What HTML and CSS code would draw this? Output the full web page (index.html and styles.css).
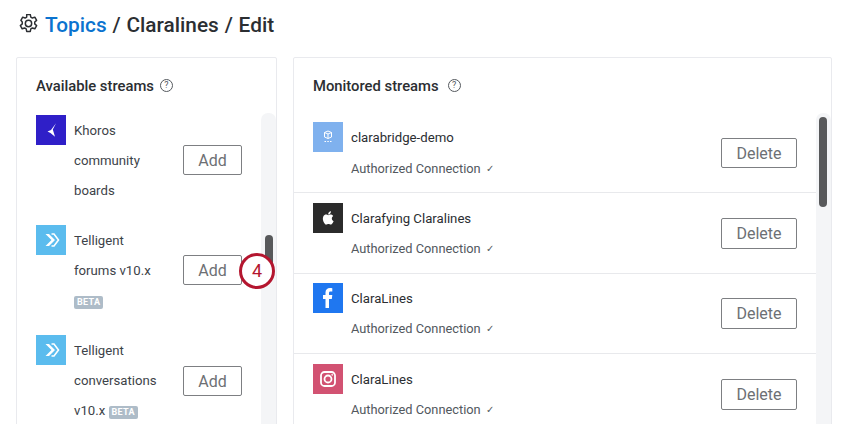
FILE: index.html
```html
<!DOCTYPE html>
<html lang="en">
<head>
<meta charset="utf-8">
<title>Topics / Claralines / Edit</title>
<link rel="stylesheet" href="styles.css">
</head>
<body>
<div class="page">
  <header class="crumbs">
    <svg class="gear" viewBox="1 1 18 18" width="19" height="19" fill="none" stroke="#2c2f33" stroke-width="1.4" stroke-linejoin="round"><path d="M8.300 1.500h3.400l.5 2.400 1.500.9 2.300-.8 1.700 3-1.800 1.600v1.800l1.800 1.600-1.700 3-2.300-.8-1.500.9-.5 2.400H8.300l-.5-2.400-1.500-.9-2.300.8-1.700-3 1.800-1.600V8.600L2.800 7l1.700-3 2.300.8 1.500-.9z"/><circle cx="10" cy="10" r="3"/></svg>
    <h1 class="crumb-text"><a class="crumb-link" href="#">Topics</a> / Claralines / Edit</h1>
  </header>
  <main class="panels">
    <section class="panel panel-left">
      <h2 class="panel-title">Available streams <span class="help">?</span></h2>
      <div class="scroller">
        <ul class="avail-list">
          <li class="avail">
            <span class="logo logo-khoros"><svg viewBox="0 0 30 30" width="30" height="30" fill="#fff"><path d="M20 8.300 16.800 14.500 19 21.700 14.500 18 11.500 16.500 15 15z"/></svg></span>
            <div class="avail-text">Khoros<br>community<br>boards</div>
            <button class="btn btn-add">Add</button>
          </li>
          <li class="avail">
            <span class="logo logo-telligent"><svg viewBox="0 0 30 30" width="30" height="30"><path d="M9.500 9h3.500l6 6-6 6H9.500l6-6z" fill="#fff"/><path d="M15.500 9H18l4.500 6-4.500 6h-2.500" fill="none" stroke="#fff" stroke-width="1.600"/></svg></span>
            <div class="avail-text">Telligent<br>forums v10.x<br><span class="beta">BETA</span></div>
            <button class="btn btn-add">Add</button>
          </li>
          <li class="avail">
            <span class="logo logo-telligent"><svg viewBox="0 0 30 30" width="30" height="30"><path d="M9.500 9h3.500l6 6-6 6H9.500l6-6z" fill="#fff"/><path d="M15.500 9H18l4.500 6-4.500 6h-2.500" fill="none" stroke="#fff" stroke-width="1.600"/></svg></span>
            <div class="avail-text">Telligent<br>conversations<br>v10.x <span class="beta">BETA</span></div>
            <button class="btn btn-add btn-low">Add</button>
          </li>
        </ul>
        <div class="track track-left"><div class="thumb thumb-left"></div></div>
      </div>
      <span class="step">4</span>
    </section>
    <section class="panel panel-right">
      <h2 class="panel-title">Monitored streams <span class="help help-wide">?</span></h2>
      <div class="scroller">
        <ul class="mon-list">
          <li class="mon">
            <span class="logo logo-cb"><svg viewBox="0 0 30 30" width="30" height="30" fill="none" stroke="#fff" stroke-width="1"><path d="M11.500 10.500 15 9l3.500 1.500V15L15 16.500 11.500 15zM11.500 10.500 15 12l3.500-1.500M15 12v4.500"/><path d="M11.500 19.500h1.500M14.300 19.500h1.500M17 19.500h1.500" stroke-width="1.200"/></svg></span>
            <div class="mon-text"><div class="mon-name">clarabridge-demo</div><div class="mon-status">Authorized Connection <span class="tick">✓</span></div></div>
            <button class="btn btn-del">Delete</button>
          </li>
          <li class="mon">
            <span class="logo logo-apple"><svg viewBox="0 0 30 30" width="30" height="30" fill="#fff"><path d="M18.800 15.400c0-1.600 1.300-2.400 1.400-2.500-.8-1.100-2-1.300-2.400-1.300-1-.1-2 .6-2.500.6s-1.300-.6-2.200-.6c-1.100 0-2.100.7-2.700 1.700-1.200 2-.3 5 .8 6.600.6.800 1.200 1.700 2.100 1.700.8 0 1.200-.5 2.200-.5s1.300.5 2.200.5 1.500-.8 2-1.600c.7-.9.900-1.800.9-1.900 0 0-1.800-.7-1.800-2.700z"/><path d="M17.200 10.500c.5-.6.800-1.400.7-2.200-.7 0-1.500.5-2 1-.4.500-.8 1.300-.7 2.100.8.100 1.500-.4 2-.9z"/></svg></span>
            <div class="mon-text"><div class="mon-name">Clarafying Claralines</div><div class="mon-status">Authorized Connection <span class="tick">✓</span></div></div>
            <button class="btn btn-del">Delete</button>
          </li>
          <li class="mon">
            <span class="logo logo-fb"><svg viewBox="0 0 30 30" width="30" height="30" fill="#fff"><path d="M12.500 25V16H10v-4h2.500V9.500C12.500 6.500 14.300 5 17 5c1 0 2 .1 2.300.2v3.300h-1.700c-1.300 0-1.600.7-1.600 1.600V12h3.300l-.5 4H16v9z"/></svg></span>
            <div class="mon-text"><div class="mon-name">ClaraLines</div><div class="mon-status">Authorized Connection <span class="tick">✓</span></div></div>
            <button class="btn btn-del">Delete</button>
          </li>
          <li class="mon">
            <span class="logo logo-ig"><svg viewBox="0 0 30 30" width="30" height="30" fill="none" stroke="#fff" stroke-width="1.800"><rect x="8" y="8" width="14" height="14" rx="3.500"/><circle cx="15" cy="15" r="3.500"/><circle cx="19.200" cy="10.800" r=".6" fill="#fff" stroke-width=".6"/></svg></span>
            <div class="mon-text"><div class="mon-name">ClaraLines</div><div class="mon-status">Authorized Connection <span class="tick">✓</span></div></div>
            <button class="btn btn-del">Delete</button>
          </li>
        </ul>
        <div class="track track-right"><div class="thumb thumb-right"></div></div>
      </div>
    </section>
  </main>
</div>
</body>
</html>
```

FILE: styles.css
```css
* { box-sizing: border-box; }
html, body { margin: 0; height: 424px; overflow: hidden; background: #fff; }
body { font-family: Roboto, "Noto Sans", sans-serif; color: #32363a; }
.page { padding: 0 18px 0 16px; height: 424px; overflow: hidden; }
.crumbs { height: 57px; display: flex; align-items: center; gap: 7px; padding: 0 0 8px 3px; }
.gear { flex: none; margin-top: -2px; }
.crumb-text { margin: 0; font-size: 20.800px; font-weight: 500; line-height: 26px; color: #2b2e32; word-spacing: .7px; }
.crumb-link { color: #0b73cf; text-decoration: none; }
.panels { display: flex; gap: 16px; align-items: flex-start; }
.panel { position: relative; height: 420px; border: 1px solid #e9eaee; border-radius: 2px; display: flex; flex-direction: column; }
.panel-left { width: 261px; }
.panel-right { width: 539px; }
.panel-title { margin: 0; height: 55px; padding: 0 0 0 19px; font-size: 14.800px; line-height: 22px; font-weight: 500; color: #2b2e32; display: flex; align-items: center; align-self: flex-start; gap: 6px; }
.help { width: 13px; height: 13px; border: 1px solid #55595e; border-radius: 50%; font-size: 9px; line-height: 11px; font-weight: 400; text-align: center; color: #55595e; }
.help-wide { margin-left: 3px; }
.scroller { flex: 1; display: flex; min-height: 0; overflow: hidden; }
.avail-list, .mon-list { list-style: none; margin: 0; padding: 0; flex: 1; min-width: 0; }
.avail { display: flex; align-items: flex-start; height: 110px; padding: 2px 0 0 19px; }
.logo { flex: none; width: 30px; height: 30px; display: block; }
.logo svg { display: block; }
.logo-khoros { background: #2f1fc8; }
.logo-telligent { background: #5bbcee; }
.logo-cb { background: #7fb1ee; }
.logo-apple { background: #2b2b2b; }
.logo-fb { background: #1f77f0; }
.logo-ig { background: #d25272; }
.avail-text { width: 109px; margin: 1px 0 0 8px; font-size: 13.200px; line-height: 30.200px; color: #3d4349; white-space: nowrap; }
.beta { display: inline-block; background: #aebcc8; color: #fff; font-size: 9px; font-weight: 700; line-height: 13px; height: 13px; padding: 0 3px; border-radius: 2px; letter-spacing: .3px; vertical-align: 0; }
.btn { flex: none; background: #fff; border: 1px solid #7d7f82; border-radius: 2px; font-family: inherit; font-size: 16px; color: #6d7074; height: 30px; padding: 0; }
.btn-add { width: 59px; margin-top: 30px; }
.btn-low { margin-top: 31px; }
.btn-del { width: 76px; height: 31px; margin: 15px 19px 0 0; }
.mon { display: flex; align-items: flex-start; height: 80.500px; padding-top: 9.500px; padding-left: 19px; border-bottom: 1px solid #e8e9ec; }
.mon:first-child { height: 71px; padding-top: 0; margin-top: 9px; }
.mon:first-child .btn-del { height: 30px; margin-top: 16px; }
.mon-text { flex: 1; margin-left: 8px; min-width: 0; }
.mon-name { font-size: 13.200px; line-height: 31px; color: #2b2e32; }
.mon-status { font-size: 12.800px; line-height: 30px; color: #52585e; }
.mon:first-child .mon-status { line-height: 31px; }
.tick { font-size: 10px; margin-left: 2px; vertical-align: 1px; color: #55595e; }
.track { flex: none; width: 15px; background: #f4f5f7; border-radius: 7px 7px 0 0; padding-top: 4px; }
.thumb { background: #58595b; border-radius: 4px; width: 8px; margin-left: 3px; }
.thumb-left { height: 32px; margin-top: 118px; margin-left: 4px; }
.thumb-right { height: 90px; }
.step { position: absolute; left: 222px; top: 195px; width: 36px; height: 36px; border: 3px solid #b4162f; border-radius: 50%; background: #fff; color: #b4162f; font-size: 18px; font-weight: 400; line-height: 30px; text-align: center; }
```
